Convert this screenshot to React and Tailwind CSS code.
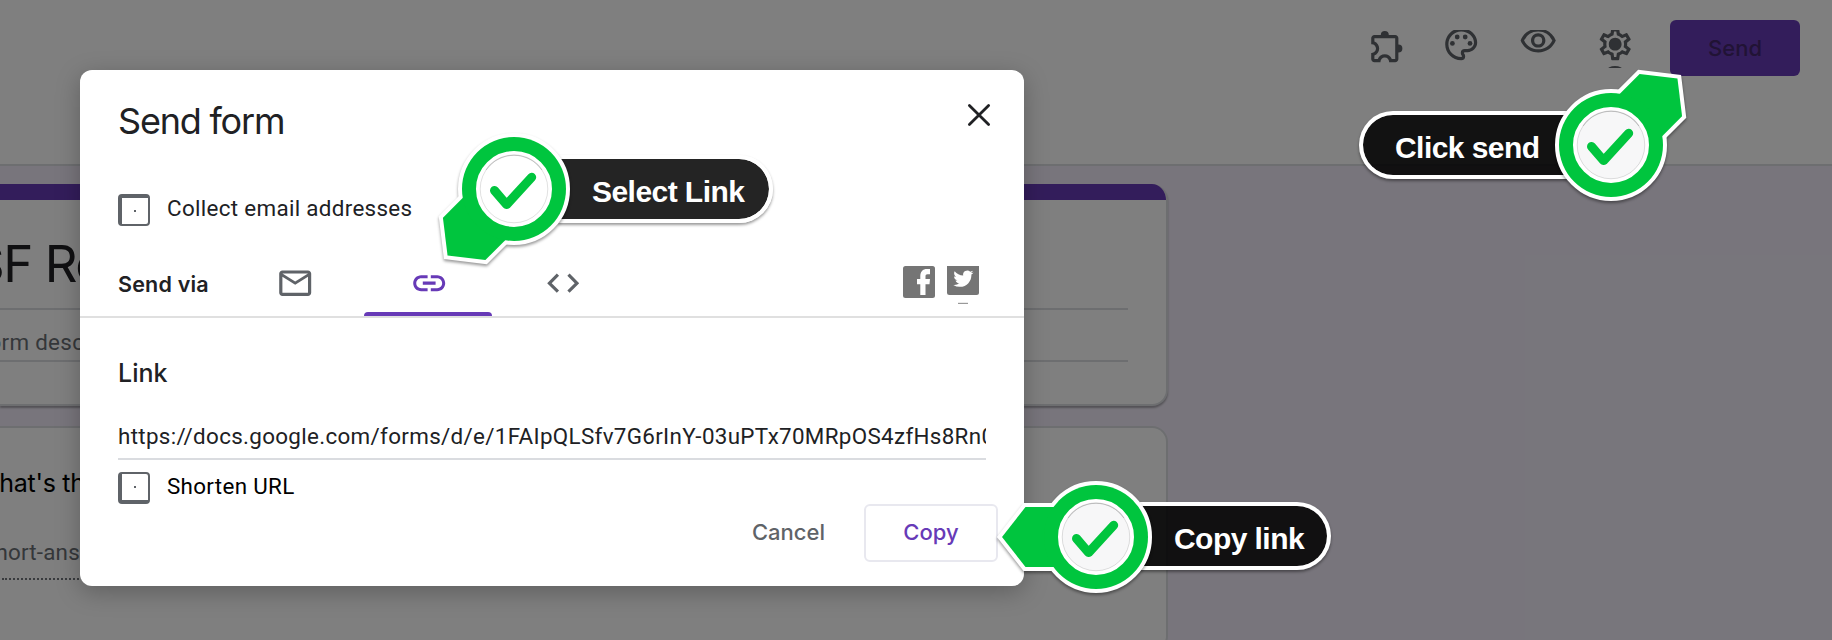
import { MdOutlineMail, MdLink, MdCode, MdOutlinePalette, MdOutlineVisibility, MdOutlineSettings } from "react-icons/md";

function Puzzle({ className }) {
  return (
    <svg className={className} viewBox="0 0 24 24" fill="currentColor">
      <path fillRule="evenodd" d="M19 11V7c0-1.1-.9-2-2-2h-4a2.5 2.5 0 0 0-5 0H4c-1.1 0-1.99.9-1.99 2v3.8h.29c1.49 0 2.7 1.21 2.7 2.7s-1.21 2.7-2.7 2.7H2V20c0 1.1.9 2 2 2h3.8v-.3c0-1.49 1.21-2.7 2.7-2.7s2.7 1.21 2.7 2.7v.3H17c1.1 0 2-.9 2-2v-4a2.5 2.5 0 0 0 0-5zM17 20h-2.12c-.68-1.75-2.39-3-4.38-3s-3.7 1.25-4.38 3H4v-2.12c1.75-.68 3-2.39 3-4.38s-1.24-3.7-2.99-4.38L4 7h13z" />
    </svg>
  );
}

function Marker({ angle, className }) {
  const arrow = "M-94 0L-70.5 -30H0V30H-70.5Z";
  return (
    <svg className={className} width="220" height="220" viewBox="-110 -110 220 220" style={{ filter: "drop-shadow(0 2px 1.5px rgba(0,0,0,.4))" }}>
      <defs>
        <mask id={"hole" + angle}>
          <rect x="-110" y="-110" width="220" height="220" fill="white" />
          <circle r="36" fill="black" />
        </mask>
      </defs>
      <g mask={"url(#hole" + angle + ")"}>
        <g transform={"rotate(" + angle + ")"} fill="white" stroke="white" strokeWidth="8">
          <path d={arrow} />
          <circle r="52" />
        </g>
        <g transform={"rotate(" + angle + ")"} fill="#00c53e">
          <path d={arrow} />
          <circle r="52" />
        </g>
      </g>
      <circle r="36" fill={angle === -45 ? "#fff" : "#f7f7f8"} stroke="white" strokeWidth="4" />
      <circle r="33.8" fill="none" stroke="black" strokeOpacity=".12" strokeWidth="1" />
      <path d="M-28 -19A33.8 33.8 0 0 1 28 -19" fill="none" stroke="black" strokeOpacity=".15" strokeWidth="1.2" />
      <path d="M-19.5 1.5L-7.4 15.6L17.7 -11.7" fill="none" stroke="#00c53e" strokeWidth="9" strokeLinecap="round" strokeLinejoin="round" />
    </svg>
  );
}

const pill = "absolute box-border flex h-[68px] items-center border-4 border-white bg-black/86 bg-clip-padding pt-1 font-['Liberation_Sans',sans-serif] text-[30px] tracking-[-0.55px] font-bold text-white shadow-[0_2px_3px_rgba(0,0,0,0.4)] whitespace-nowrap";

export default function App() {
  return (
    <div className="relative h-[640px] w-[1832px] overflow-hidden bg-[#f0ebf8] font-['Roboto',sans-serif] text-[#202124]">
      <header className="flex h-[166px] items-start justify-end border-b-2 border-[#dadce0] bg-white pr-8 pt-5 text-[#5f6368]">
        <div className="mt-[10px] mr-[36px] flex h-[38px] items-start overflow-hidden">
          <Puzzle className="-mt-[3px] mr-[36px] size-[38.4px]" />
          <MdOutlinePalette className="-mt-[5px] mr-[38.4px] size-[38.4px]" />
          <MdOutlineVisibility className="-mt-[8px] mr-[38.4px] size-[38.4px]" />
          <div className="flex flex-col items-center">
            <div className="-mt-[5px] grid size-[38.4px] place-items-center *:[grid-area:1/1]">
              <MdOutlineSettings className="size-[38.4px]" />
              <i className="size-[11px] rounded-full bg-[#5f6368]" />
            </div>
            <i className="mt-[2.6px] h-2 w-4 rounded-[50%] bg-[#5f6368]" />
          </div>
        </div>
        <button className="h-14 w-[130px] rounded-md bg-[#673ab7] font-['Inter',sans-serif] text-[22px] font-medium text-[#42266b]">Send</button>
      </header>
      <main className="mt-[18px] flex w-[1168px] flex-col gap-5">
        <section className="h-[222px] overflow-hidden rounded-r-2xl border-r-2 border-b-2 border-[#dadce0] bg-white shadow-[0_2px_2px_rgba(0,0,0,0.3)]">
          <div className="-mr-[2px] h-4 bg-[#673ab7]" />
          <div className="mr-[38px] h-[110px] border-b-2 border-[#dadce0] pt-[33px]">
            <p className="-ml-[28px] font-['Inter',sans-serif] text-[51px] leading-[62px] tracking-[-1.5px]">SF Re</p>
          </div>
          <div className="mr-[38px] h-[52px] border-b-2 border-[#dadce0] pt-[16px]">
            <p className="-ml-[24px] text-[22.4px] leading-8 tracking-[0.3px] text-[#6a6f75]">Form desc</p>
          </div>
        </section>
        <section className="h-[226px] rounded-r-2xl border-2 border-l-0 border-[#dadce0] bg-white">
          <p className="mt-[37px] -ml-[25px] font-['Inter',sans-serif] text-[25px] leading-9 tracking-[-0.3px] text-black">What's th</p>
          <p className="mt-[35px] -ml-[18px] text-[22.4px] leading-8 tracking-[0.2px] text-[#6a6f75]">Short-answ</p>
          <div className="mt-[10px] ml-[2px] w-[400px] border-b-2 border-dotted border-[#70757a]" />
        </section>
      </main>

      <div className="absolute inset-0 bg-black/50" />

      <div className="absolute top-[70px] left-20 flex h-[516px] w-[944px] flex-col rounded-xl bg-white shadow-[0_6px_24px_rgba(0,0,0,0.25)]">
        <div className="flex h-[76px] items-start justify-between pr-[33px] pl-[38px]">
          <h1 className="mt-[29px] font-['Inter',sans-serif] text-[36px] leading-[44px] tracking-[-1.2px]">Send form</h1>
          <svg className="mt-[33px]" width="24" height="24" viewBox="0 0 24 24" stroke="#202124" strokeWidth="2.8" strokeLinecap="round"><path d="M2.4 2.4L21.6 21.6M21.6 2.4L2.4 21.6" /></svg>
        </div>
        <div className="mt-12 flex h-8 pl-[38px]">
          <span className="flex size-8 rounded-[4px] border-t-4 border-r-2 border-b-2 border-l-4 border-[#5f6368] pt-3 pl-3"><i className="size-[2px] bg-[#5f6368]" /></span>
          <span className="ml-[17px] text-[22.4px] leading-[28px] tracking-[0.32px]">Collect email addresses</span>
        </div>
        <div className="mt-[20px] flex h-[72px] items-stretch border-b-2 border-[#e0e0e0] pl-[38px]">
          <span className="w-[112px] pt-[24px] font-['Inter',sans-serif] text-[21.5px] leading-[28px] font-semibold tracking-[0.2px] whitespace-nowrap">Send via</span>
          <div className="flex gap-[6px] text-[#5f6368]">
            <div className="flex h-[70px] w-32 justify-center pt-[17.8px]"><MdOutlineMail className="ml-[2px] size-[38.4px]" /></div>
            <div className="flex h-[70px] w-32 flex-col items-center justify-between pt-[17.8px] text-[#673ab7]"><MdLink className="ml-[2px] size-[38.4px]" /><div className="h-1 w-32 rounded-t bg-[#673ab7]" /></div>
            <div className="flex h-[70px] w-32 justify-center pt-[17.8px]"><MdCode className="ml-[3px] size-[38.4px]" /></div>
          </div>
          <div className="ml-auto flex gap-3 pt-[20px] pr-[45px]">
            <svg width="32" height="32" viewBox="0 0 32 32"><rect width="32" height="32" rx="2.5" fill="#757575" /><path d="M17.3 29V18.2H14V13H17.3V10.3C17.3 5.7 19.7 3 24 3H27V8.2H24.6C22.9 8.2 22.5 9 22.5 10.5V13H27L26.5 18.2H22.5V29Z" fill="#fff" /></svg>
            <svg width="32" height="40" viewBox="0 0 32 40"><path d="M0 0H32V26.5Q32 29 29.5 29H2.5Q0 29 0 26.5Z" fill="#757575" /><rect x="11" y="36.8" width="10" height="1.2" fill="#999" /><g transform="translate(6.3 2.6) scale(.84)" fill="#fff"><path d="M23.95 4.57a10 10 0 0 1-2.82.77 4.96 4.96 0 0 0 2.16-2.72c-.95.56-2 .96-3.13 1.18a4.92 4.92 0 0 0-8.38 4.48C7.69 8.1 4.07 6.13 1.64 3.16a4.82 4.82 0 0 0-.67 2.48c0 1.7.87 3.2 2.19 4.1a4.9 4.9 0 0 1-2.23-.62v.06a4.92 4.92 0 0 0 3.95 4.83 5 5 0 0 1-2.21.08 4.94 4.94 0 0 0 4.6 3.42A9.87 9.87 0 0 1 0 19.54a13.99 13.99 0 0 0 7.55 2.21c9.05 0 14-7.5 14-13.98 0-.21 0-.42-.02-.63a9.94 9.94 0 0 0 2.46-2.55z" /></g></svg>
          </div>
        </div>
        <h2 className="mt-[40px] pl-[38px] font-['Inter',sans-serif] text-[25px] leading-[30px] font-medium">Link</h2>
        <div className="mx-[38px] mt-[28px] h-[44px] overflow-hidden border-b-2 border-[#dadce0] pt-[3px] text-[22.4px] leading-[34px] tracking-[0.32px] whitespace-nowrap">https://docs.google.com/forms/d/e/1FAIpQLSfv7G6rInY-03uPTx70MRpOS4zfHs8Rn0</div>
        <div className="mt-[12px] flex h-8 pl-[38px] text-black">
          <span className="flex size-8 rounded-[4px] border-t-2 border-r-2 border-b-4 border-l-4 border-[#5f6368] pt-3 pl-3"><i className="size-[2px] bg-[#5f6368]" /></span>
          <span className="ml-[17px] text-[22.4px] leading-[28px] tracking-[0.32px]">Shorten URL</span>
        </div>
        <div className="flex items-center justify-end pr-[26px] font-['Inter',sans-serif] text-[22px] font-medium">
          <button className="mr-[39px] pb-[2px] text-[#5f6368]">Cancel</button>
          <button className="h-[58px] w-[134px] rounded-md border-2 border-[#e8e8ef] pb-[2px] text-[#673ab7]">Copy</button>
        </div>
      </div>

      <div className={pill + " top-[111px] left-[1359px] w-[208px] rounded-l-full border-r-0 pl-[32px]"}>Click send</div>
      <Marker angle={135} className="absolute top-[35px] left-[1501px]" />
      <div className={pill + " top-[155px] left-[558px] w-[215px] rounded-r-full border-l-0 pl-[34px]"}>Select Link</div>
      <Marker angle={-45} className="absolute top-[79.3px] left-[404px]" />
      <div className={pill + " top-[502px] left-[1140px] w-[191px] rounded-r-full border-l-0 pl-[34px]"}>Copy link</div>
      <Marker angle={0} className="absolute top-[427px] left-[985.7px]" />
    </div>
  );
}
